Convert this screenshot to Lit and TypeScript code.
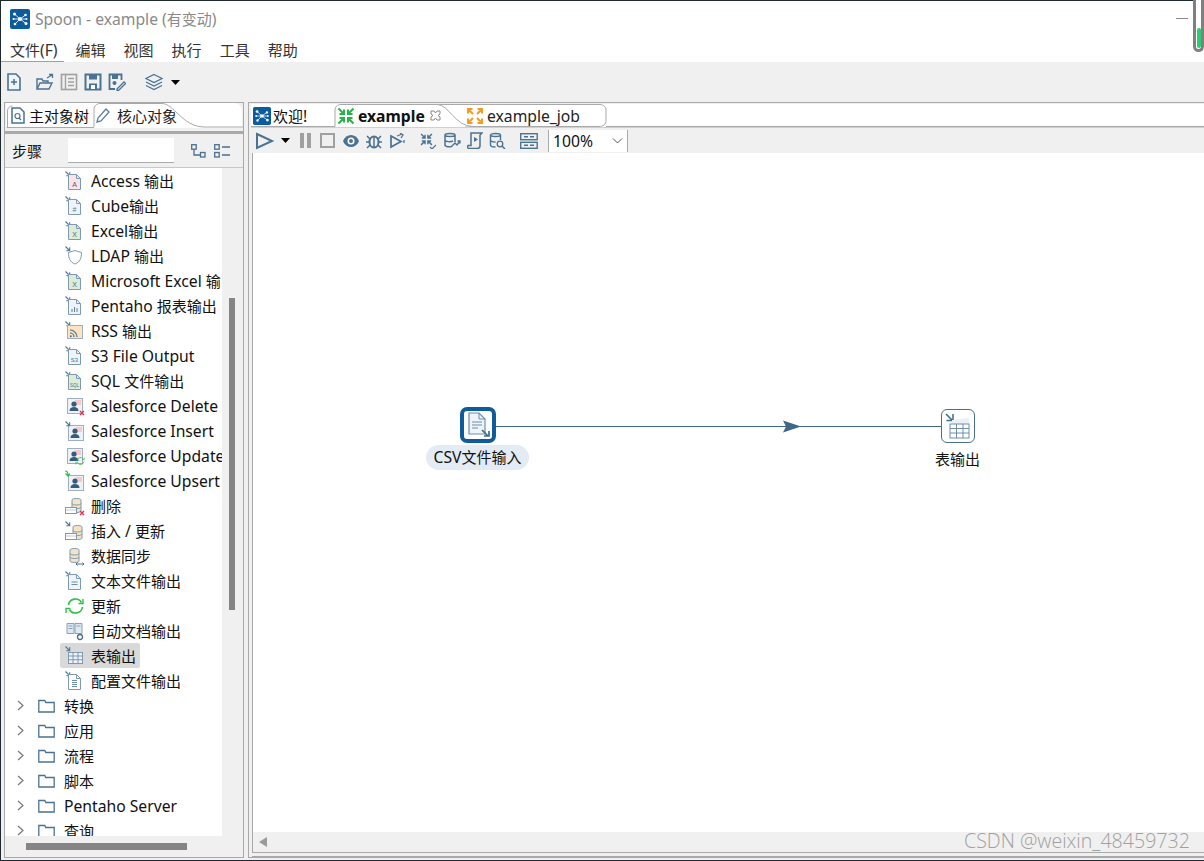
import { LitElement, html, css, svg } from "lit";
import { customElement } from "lit/decorators.js";

const B = "#4a7293";
const sv = (w: number, h: number, c: unknown, vb = `0 0 ${w} ${h}`) =>
  html`<svg class="ic" width=${w} height=${h} viewBox=${vb} fill="none">${c}</svg>`;

/* Latin runs are set slightly larger than CJK runs, as in the reference. */
const T = (s: string) =>
  s.split(/([\u3000-\u9fff]+)/).map((p, i) => (i % 2 ? html`<span class="cjk">${p}</span>` : p));

const arrow = svg`<path d="M1.500 1.500l4 4M2.300 5.700h3.400V2.300" stroke="#4f7896" stroke-width="1.100"/>`;
const page = (fill: string, mark: unknown = "") => svg`<path d="M4.500 4.500h8l4 4v11h-12z" fill=${fill} stroke="#7d9ab2" stroke-width="1"/><path d="M12.500 4.500v4h4" stroke="#7d9ab2"/>${mark}`;
const tiny = (t: string, c = "#4d6f8c", s = 6) => svg`<text x="10.500" y="16.500" font-size=${s} font-family="Liberation Sans" text-anchor="middle" fill=${c}>${t}</text>`;
const sfBase = svg`<rect x="3.500" y="3.500" width="15" height="15" fill="#eef1f5" stroke="#9db0c2"/><rect x="11" y="5" width="6" height="5" fill="#f7c8cc"/><circle cx="10" cy="9" r="2.600" fill="#345d7d"/><path d="M5.500 16c0-3 2-4 4.500-4s4.500 1 4.500 4z" fill="#345d7d"/>`;
const redX = svg`<path d="M16 16l4 4M20 16l-4 4" stroke="#e8304a" stroke-width="1.400"/>`;
const db = svg`<path d="M7 4c0-2 9-2 9 0v11c0 2-9 2-9 0z" fill="#f5e3c6" stroke="#7d9ab2"/><path d="M7 7.500c0 2 9 2 9 0M7 11c0 2 9 2 9 0" stroke="#7d9ab2"/>`;
const grn = svg`<path d="M4 9a7 7 0 0 1 13-2.500M18 11a7 7 0 0 1-13 2.500" stroke="#2fbf4a" stroke-width="1.600"/><path d="M18.500 3v4.500H14M1.500 17v-4.500H6" stroke="#2fbf4a" stroke-width="1.400"/>`;

const icons: Record<string, unknown> = {
  access: svg`${arrow}${page("#fbe3e6", tiny("A", "#5a5a78", 7))}`,
  cube: svg`${arrow}${page("#eef4fa", tiny("#", "#5f7f9b", 7))}`,
  excel: svg`${arrow}${page("#dcecd6", tiny("X", "#4d6f8c", 7))}`,
  ldap: svg`${arrow}<path d="M11 5.500l6.500 2c0 6-1.500 9.500-6.500 11.500-5-2-6.500-5.500-6.500-11.500z" fill="#fff" stroke="#7d9ab2"/>`,
  pentaho: svg`${arrow}${page("#eef4fa", svg`<path d="M8 17v-3M10.500 17v-5M13 17v-4" stroke="#5f7f9b"/>`)}`,
  rss: svg`${arrow}<rect x="3.500" y="5.500" width="15" height="13" fill="#fbe3c0" stroke="#9db0c2"/><path d="M6 10a7 7 0 0 1 7 7M6 13a4 4 0 0 1 4 4" stroke="#4d6f8c" stroke-width="1.200"/><circle cx="6.800" cy="16.200" r="1" fill="#4d6f8c"/>`,
  s3: svg`${arrow}${page("#eef4fa", tiny("S3", "#4d6f8c", 6))}`,
  sql: svg`${arrow}${page("#dcecd6", tiny("SQL", "#4d6f8c", 4.500))}`,
  sfd: svg`${sfBase}${redX}`,
  sfi: svg`<g transform="translate(1 2)">${sfBase}</g>${arrow}`,
  sfu: svg`${sfBase}<g transform="translate(11 11) scale(.5)">${grn}</g>`,
  sfp: svg`<g transform="translate(1 2)">${sfBase}</g><path d="M1 1c2 0 3 1 3 4M1.500 3.500L4 6l2-2.500" stroke="#2fbf4a" stroke-width="1.200"/>`,
  del: svg`<g transform="translate(1 1)">${db}</g><rect x="1.500" y="12.500" width="11" height="6" fill="#fff" stroke="#7d9ab2"/><path d="M1.500 15h11" stroke="#7d9ab2" stroke-dasharray="1 1"/>${redX}`,
  ins: svg`<g transform="translate(2 3)">${db}</g>${arrow}<rect x="1.500" y="13.500" width="11" height="6" fill="#fff" stroke="#7d9ab2"/><path d="M1.500 16h11" stroke="#7d9ab2" stroke-dasharray="1 1"/>`,
  sync: svg`<g transform="translate(-1 1)">${db}</g><path d="M12 19h8M13.500 17.500L12 19l1.500 1.500M18.500 17.500L20 19l-1.500 1.500" stroke="#4d6f8c"/>`,
  text: svg`${arrow}${page("#eef4fa", svg`<path d="M7.500 12h6M7.500 14.500h6" stroke="#6f8ea8"/>`)}`,
  update: svg`<g transform="translate(.5 1)">${grn}</g>`,
  doc: svg`<path d="M3 3.500h7v10H3zM11 3.500h7v10h-7z" fill="#dfe8f0" stroke="#8aa3b8"/><path d="M4.500 6h4M4.500 8.500h4M12.500 6h4" stroke="#8aa3b8"/><circle cx="16" cy="17" r="2.500" stroke="#4d6f8c" stroke-width="1.300"/>`,
  table: svg`${arrow}<rect x="4.500" y="7.500" width="14" height="11" fill="#eef2f6" stroke="#7d9ab2"/><path d="M4.500 11h14M4.500 14.700h14M9 7.500v11M14 7.500v11" stroke="#7d9ab2"/>`,
  cfg: svg`${arrow}${page("#fff", svg`<path d="M8 10.500h5M8 12.500h5M8 14.500h5M8 16.500h5" stroke="#6f8ea8"/>`)}`,
};

const outputs: [string, string][] = [
  ["access", "Access 输出"], ["cube", "Cube输出"], ["excel", "Excel输出"], ["ldap", "LDAP 输出"],
  ["excel", "Microsoft Excel 输出"], ["pentaho", "Pentaho 报表输出"], ["rss", "RSS 输出"], ["s3", "S3 File Output"],
  ["sql", "SQL 文件输出"], ["sfd", "Salesforce Delete"], ["sfi", "Salesforce Insert"], ["sfu", "Salesforce Update"],
  ["sfp", "Salesforce Upsert"], ["del", "删除"], ["ins", "插入 / 更新"], ["sync", "数据同步"],
  ["text", "文本文件输出"], ["update", "更新"], ["doc", "自动文档输出"], ["table", "表输出"], ["cfg", "配置文件输出"],
];
const folders = ["转换", "应用", "流程", "脚本", "Pentaho Server", "查询"];

const logo = (s: number) => html`<svg class="ic" width=${s} height=${s} viewBox="0 0 20 20"><rect width="20" height="20" rx="2" fill="#0b5c9e"/><path d="M10 10L4.500 5M10 10l5.500-4M10 10l-5 5M10 10l6 4.500M10 10H3.500M10 10h6.500" stroke="#fff" stroke-width=".8"/><circle cx="10" cy="10" r="2" fill="#fff"/><circle cx="4.500" cy="5" r="1.500" fill="#fff"/><circle cx="15.500" cy="6" r="1.300" fill="#fff"/><circle cx="5" cy="15" r="1.300" fill="#fff"/><circle cx="16" cy="14.500" r="1.500" fill="#fff"/><circle cx="3.500" cy="10" r="1" fill="#fff"/><circle cx="16.500" cy="10" r="1" fill="#fff"/></svg>`;

const mergeArrows = (c: string) => svg`<path d="M1.500 1.500L7 7M7 2.500V7H2.500M16.500 1.500L11 7M11 2.500V7h4.500M1.500 16.500L7 11M7 15.500V11H2.500M16.500 16.500L11 11M11 15.500V11h4.500" stroke=${c} stroke-width="2"/>`;
const outArrows = (c: string) => svg`<path d="M7 7L2 2M2 6.500V2h4.500M11 7l5-5M11.500 2H16v4.500M7 11l-5 5M2 11.500V16h4.500M11 11l5 5M16 11.500V16h-4.500" stroke=${c} stroke-width="2"/>`;

const play = sv(20, 18, svg`<path d="M2 2l15 7-15 7z" stroke=${B} stroke-width="2"/>`);
const drop = html`<svg class="ic" width="9" height="5" viewBox="0 0 9 5"><path d="M0 0h9L4.500 5z" fill="#000"/></svg>`;

@customElement("app-root")
export class AppRoot extends LitElement {
  static styles = css`
    :host { display: block; width: 1204px; height: 861px; overflow: hidden; position: relative; background: #f0f0f0;
      font-family: "Noto Sans", "Noto Sans CJK SC", sans-serif; font-size: 15.7px; color: #111; }
    .cjk { font-size: 15px; }
    .ic { display: block; flex: none; }
    .app { display: flex; flex-direction: column; height: 859px; border-top: 1px solid #1f2a2e; border-left: 1px solid #1f2a2e; border-bottom: 1px solid #1f2a2e; }
    .title { height: 36px; background: #fff; display: flex; align-items: center; gap: 5px; padding-left: 9px; color: #8a8a8a; flex: none; }
    .menu { height: 25px; background: #fff; display: flex; align-items: center; gap: 18px; padding-left: 9px; flex: none; color: #333; }
    .menu span { line-height: 20px; }
    .menu .first { border-bottom: 1px solid #a0a0a0; margin-left: -9px; padding: 3px 6px 1px 9px; align-self: flex-end; margin-right: -6px; }
    .tools { height: 40px; flex: none; display: flex; align-items: center; padding-left: 5px; background: #f0f0f0; }
    .tools .ic { margin-right: 6px; }
    .s1 { width: 1px; flex: none; } .s2 { width: 2px; flex: none; } .s3 { width: 3px; flex: none; } .s4 { width: 4px; flex: none; } .s8 { width: 8px; flex: none; } .s9 { width: 9px; flex: none; } .s13 { width: 13px; flex: none; }
    .main { flex: 1; display: flex; min-height: 0; padding-left: 3px; gap: 4px; }
    .left { width: 240px; flex: none; border: 1px solid #a9a9a9; box-sizing: border-box; display: flex; flex-direction: column; background: #f0f0f0; height: 756px; }
    .ltabs { height: 25px; background: #fff; position: relative; margin: 0 1px; display: flex; align-items: center; flex: none; border-radius: 0 8px 0 0; }
    .shape { position: absolute; left: 0; top: 0; }
    .tab { position: relative; display: flex; align-items: center; gap: 3px; white-space: nowrap; }
    .lt1 { margin-left: 5px; width: 83px; gap: 4px; }
    .lt2 { margin-left: 1px; color: #222; gap: 6px; }
    .lline { height: 3px; margin-top: 3px; background: #a9a9a9; flex: none; }
    .steps { height: 34px; flex: none; display: flex; align-items: center; padding-left: 7px; border-bottom: 1px solid #c8c8c8; box-sizing: border-box; }
    .steps .lbl { width: 56px; }
    .input { width: 106px; height: 25px; background: #fff; border-bottom: 1px solid #aaa; box-sizing: border-box; margin-right: 17px; }
    .steps .ic { margin-right: 6px; }
    .treewrap { flex: 1; min-height: 0; display: flex; position: relative; }
    .tree { width: 217px; background: #fff; overflow: hidden; flex: none; height: 668px; }
    .row { height: 25px; display: flex; align-items: center; white-space: nowrap; position: relative; }
    .leaf { padding-left: 59px; gap: 6px; }
    .leaf.sel::before { content: ""; position: absolute; left: 55px; top: 0; width: 80px; height: 25px; background: #d9d9d9; border-radius: 2px; }
    .leaf > * { position: relative; }
    .folder { padding-left: 12px; }
    .folder .chev { margin-right: 14px; }
    .folder .fo { margin-right: 9px; }
    .vthumb { position: absolute; left: 224px; top: 130px; width: 6px; height: 312px; background: #858585; }
    .hthumb { position: absolute; left: 21px; top: 675px; width: 161px; height: 7px; background: #858585; }
    .right { flex: 1; min-width: 0; border: 1px solid #a9a9a9; border-right: none; box-sizing: border-box; display: flex; flex-direction: column; padding: 1px 0 0 2px; height: 756px; }
    .rtabs { height: 23px; background: #fff; position: relative; display: flex; align-items: center; flex: none; }
    .rt1 { margin-left: 2px; width: 84px; gap: 2px; }
    .rt2 { width: 129px; font-weight: 700; color: #111; gap: 3px; }
    .rt2 .x { margin-left: 2px; }
    .rt3 { gap: 3px; color: #222; }
    .rbar { height: 26px; flex: none; display: flex; align-items: center; padding-left: 4px; border-top: 1px solid #d0d0d0; box-sizing: border-box; }
    .rbar .ic { margin-right: 6px; }
    .zoom { width: 80px; height: 22px; background: #fff; border-left: 1px solid #aaa; border-right: 1px solid #aaa; box-sizing: border-box; display: flex; align-items: center; justify-content: space-between; padding: 0 4px; margin-left: 4px; }
    .zoom .ic { margin: 0; }
    .canvas { flex: 1; min-height: 0; background: #fff; position: relative; border-left: 1px solid #a9a9a9; overflow: hidden; margin-left: 1px; }
    .edge { position: absolute; left: 0; top: 0; }
    .node { position: absolute; box-sizing: border-box; background: #fff; display: flex; align-items: center; justify-content: center; }
    .n1 { left: 207px; top: 254px; width: 36px; height: 36px; border: 4px solid #0f5c9c; border-radius: 7px; }
    .n2 { left: 688px; top: 256px; width: 34px; height: 34px; border: 1.5px solid #4a6e8e; border-radius: 6px; }
    .lab { position: absolute; white-space: nowrap; line-height: 25px; text-align: center; }
    .l1 { left: 173px; top: 292px; width: 103px; height: 25px; background: #e3ebf4; border-radius: 13px; color: #111; }
    .l2 { left: 682px; top: 294px; width: 45px; height: 25px; }
    .hbar { height: 20px; flex: none; background: #f0f0f0; display: flex; align-items: center; padding-left: 6px; margin-left: 1px; border-left: 1px solid #a9a9a9; }
    .bot { flex: none; height: 5px; border-top: 1px solid #a9a9a9; border-bottom: 1px solid #a9a9a9; box-sizing: border-box; margin-left: 1px; }
    .wm { position: absolute; left: 964px; top: 828px; font-size: 19.600px; line-height: 26px; color: #a0a0a0; white-space: nowrap; font-family: "Open Sans", sans-serif; font-weight: 300; }
    .min { position: absolute; left: 1176px; top: 18px; width: 12px; height: 1px; background: #8a8a8a; }
    .pill { position: absolute; left: 1193px; top: -6px; width: 11px; height: 58px; box-sizing: border-box; border: 3px solid #808080; border-top: none; border-radius: 0 0 7px 7px; background: #fff; }
    .pill i { position: absolute; left: .5px; top: 34px; width: 4px; height: 20px; border-radius: 2px; background: #2ecc71; }
  `;

  render() {
    return html`
      <div class="app">
        <div class="title">${logo(20)}<span>${T("Spoon - example (有变动)")}</span></div>
        <div class="menu">
          <span class="first">${T("文件(F)")}</span><span class="cjk">编辑</span><span class="cjk">视图</span><span class="cjk">执行</span><span class="cjk">工具</span><span class="cjk">帮助</span>
        </div>
        <div class="tools">
          ${sv(16, 20, svg`<path d="M2 2h8l4 4v12H2z" stroke=${B} stroke-width="1.600" fill="#eef4fa"/><path d="M5 10h6M8 7v6" stroke=${B} stroke-width="1.500"/>`)}
          <span class="s8"></span>
          ${sv(18, 18, svg`<path d="M1 16V6h5l1 2h5v2M1 16l3-6h12l-3 6z" stroke=${B} stroke-width="1.400"/><path d="M11 5l5-3M13 1.500h3.500V5" stroke=${B} stroke-width="1.300"/>`)}
          ${sv(18, 18, svg`<rect x="1.500" y="1.500" width="15" height="15" stroke="#a0a0a0" stroke-width="1.600"/><path d="M5.500 2v14M8 5.500h6M8 9h6M8 12.500h6" stroke="#a0a0a0" stroke-width="1.400"/>`)}
          ${sv(18, 18, svg`<path d="M1.500 1.500h15v15h-15z" stroke=${B} stroke-width="2"/><path d="M5 1.500h8v5H5zM5 16.500v-6h8v6" fill=${B}/><rect x="7" y="12" width="4" height="4" fill="#fff"/>`)}
          ${sv(18, 18, svg`<path d="M7 16H1.500V1.500h12V7" stroke=${B} stroke-width="1.800"/><path d="M4 2h6v4H4z" fill=${B}/><circle cx="6.500" cy="10" r="2" fill=${B}/><path d="M9 16l7-7 1.500 1.500-7 7H9z" stroke=${B} stroke-width="1.300"/>`)}
          <span class="s13"></span>
          ${sv(18, 18, svg`<path d="M9 1.500l8 4-8 4-8-4zM1 9l8 4 8-4M1 12.500l8 4 8-4" stroke=${B} stroke-width="1.200"/>`)}
          <span class="s2"></span>
          ${drop}
        </div>
        <div class="main">
          <section class="left">
            <div class="ltabs">
              <svg class="shape" width="238" height="25" viewBox="0 0 238 25" fill="none"><path d="M.5 24.500H88" stroke="#a9a9a9"/><path d="M1.500 24V8c0-3 2-5 5-5" stroke="#a9a9a9"/><path d="M88 24V6c0-3 3-5.500 6-5.500h62c12 0 20 23 42 23.500h40" stroke="#a9a9a9" fill="#fff"/></svg>
              <div class="tab lt1">${sv(14, 17, svg`<path d="M1 1h8l4 4v11H1z" stroke=${B} stroke-width="1.500"/><circle cx="6.500" cy="9" r="2.500" stroke=${B} stroke-width="1.200"/><path d="M8 11l2 2" stroke=${B} stroke-width="1.200"/>`)}<span class="cjk">主对象树</span></div>
              <div class="tab lt2">${sv(16, 17, svg`<path d="M2 15l1-4 8-9 3 3-8 9z" stroke="#5a7f9e" stroke-width="1.300"/>`)}<span class="cjk">核心对象</span></div>
            </div>
            <div class="lline"></div>
            <div class="steps">
              <span class="lbl cjk">步骤</span><div class="input"></div>
              ${sv(15, 14, svg`<rect x=".7" y=".7" width="4.500" height="4.500" stroke="#4a6f8f" stroke-width="1.300"/><rect x="9.500" y="8.500" width="4.500" height="4.500" stroke="#4a6f8f" stroke-width="1.300"/><path d="M3 5.500V11h6.500" stroke="#4a6f8f" stroke-width="1.300"/>`)}
              <span class="s2"></span>
              ${sv(17, 14, svg`<rect x=".7" y=".7" width="4.500" height="4.500" stroke="#4a6f8f" stroke-width="1.300"/><rect x=".7" y="8.500" width="4.500" height="4.500" stroke="#4a6f8f" stroke-width="1.300"/><path d="M8 3h8M8 11h8" stroke="#4a6f8f" stroke-width="1.300"/>`)}
            </div>
            <div class="treewrap">
              <div class="tree">
                ${outputs.map(([k, t]) => html`<div class="row leaf ${t === "表输出" ? "sel" : ""}">${sv(21, 21, icons[k])}<span>${T(t)}</span></div>`)}
                ${folders.map((t) => html`<div class="row folder">
                  <svg class="ic chev" width="7" height="11" viewBox="0 0 7 11" fill="none"><path d="M1 1l5 4.500L1 10" stroke="#777" stroke-width="1.200"/></svg>
                  <svg class="ic fo" width="17" height="14" viewBox="0 0 17 14" fill="none"><path d="M.8 13V1.500h6l1 2h8.400V13z" stroke="#4a7293" stroke-width="1.300"/></svg>
                  <span>${T(t)}</span></div>`)}
              </div>
              <div class="vthumb"></div>
              <div class="hthumb"></div>
            </div>
          </section>
          <section class="right">
            <div class="rtabs">
              <svg class="shape" width="954" height="23" viewBox="0 0 954 23" fill="none"><path d="M0 22.500h84" stroke="#a9a9a9"/><path d="M355 22.500H954" stroke="#a9a9a9"/><path d="M214 22.500h134c4 0 7-2 7-6V6c0-3-3-5.500-6-5.500H186" stroke="#a9a9a9"/><path d="M84 22.500V6c0-3 2-5.500 6-5.500h96c12 0 18 22 36 22h4" stroke="#a9a9a9" fill="#fff"/></svg>
              <div class="tab rt1">${logo(18)}<span>${T("欢迎!")}</span></div>
              <div class="tab rt2">${sv(18, 18, mergeArrows("#27b24a"), "0 0 18 18")}<span>example</span><svg class="ic x" width="11" height="11" viewBox="0 0 11 11" fill="none"><path d="M1 1h3l1.500 2L7 1h3v3L8 5.500 10 7v3H7L5.500 8 4 10H1V7l2-1.500L1 4z" stroke="#888"/></svg></div>
              <div class="tab rt3">${sv(18, 18, outArrows("#f59a23"), "0 0 18 18")}<span>example_job</span></div>
            </div>
            <div class="rbar">
              ${play}
              ${drop}
              <span class="s4"></span>
              ${sv(11, 15, svg`<path d="M0 0h4v15H0zM7 0h4v15H7z" fill="#a0a0a0"/>`)}
              <span class="s3"></span>
              ${sv(15, 15, svg`<rect x="1" y="1" width="13" height="13" stroke="#a0a0a0" stroke-width="2"/>`)}
              <span class="s1"></span>
              ${sv(18, 14, svg`<path d="M1 7c3-8 13-8 16 0-3 8-13 8-16 0z" fill=${B}/><circle cx="9" cy="7" r="3.500" fill="#fff"/><circle cx="9" cy="7" r="2" fill=${B}/>`)}
              ${sv(16, 16, svg`<ellipse cx="8" cy="9" rx="4.500" ry="5.500" stroke=${B} stroke-width="2"/><path d="M1 3l3 3M15 3l-3 3M0 9h3M13 9h3M1 15l3-3M15 15l-3-3M8 4v10" stroke=${B} stroke-width="1.500"/>`)}
              <span class="s1"></span>
              ${sv(16, 16, svg`<path d="M2 3l10 5.500L2 14z" stroke=${B} stroke-width="1.700"/><path d="M8 3l4-1.500M11 0l3 2-2 3M15 7v3" stroke=${B} stroke-width="1.300"/>`)}
              <span class="s9"></span>
              ${sv(16, 16, svg`<g transform="scale(.72)">${mergeArrows(B)}</g><path d="M10 14l2 2 4-4" stroke=${B} stroke-width="1.200"/>`)}
              <span class="s1"></span>
              ${sv(18, 17, svg`<path d="M2 3c0-2 10-2 10 0v7M2 3v10c0 2 5 2 6 1.500M2 3c0 2 10 2 10 0M2 8c0 2 6 2 8 1" stroke=${B} stroke-width="1.500"/><path d="M8 15l4-4 2 2 3-4M14.500 9H17v2.500" stroke=${B} stroke-width="1.300"/>`)}
              ${sv(16, 17, svg`<path d="M4 1h11l-2 2v11c0 2-2 2.500-3 2.500H2c-1 0-2-1-1-3h3zM4 14V1" stroke=${B} stroke-width="1.500"/><path d="M7 5l4 2.500L7 10z" fill=${B}/>`)}
              ${sv(17, 17, svg`<path d="M1.500 3c0-2 10-2 10 0v5M1.500 3v10c0 2 4 2 5 2M1.500 3c0 2 10 2 10 0M1.500 8c0 1.500 3 2 5 2" stroke=${B} stroke-width="1.400"/><circle cx="11" cy="12" r="2.800" stroke=${B} stroke-width="1.300"/><path d="M13 14l3 3" stroke=${B} stroke-width="1.500"/>`)}
              <span class="s8"></span>
              ${sv(18, 16, svg`<rect x=".7" y=".7" width="16.500" height="6" stroke=${B} stroke-width="1.400"/><rect x=".7" y="9.300" width="16.500" height="6" stroke=${B} stroke-width="1.400"/><path d="M4 3.700h4M10 3.700h4M4 12.300h4M10 12.300h4" stroke=${B} stroke-width="1.400"/>`)}
              <div class="zoom"><span>100%</span><svg class="ic" width="11" height="6" viewBox="0 0 11 6" fill="none"><path d="M1 .5l4.500 4.500L10 .5" stroke="#555"/></svg></div>
            </div>
            <div class="canvas">
              <svg class="edge" width="800" height="400" fill="none"><path d="M243 273.500H688" stroke="#3e6787" stroke-width="1"/><path d="M530 267.500l18 6-18 6 3-6z" fill="#3e6787"/></svg>
              <div class="node n1">${sv(26, 26, svg`<path d="M4 1h10l6 6v15H4z" fill="#eef4fa" stroke="#6f8ea8" stroke-width="1.200"/><path d="M14 1v6h6M7 10h10M7 13h10M7 16h6" stroke="#6f8ea8"/><path d="M17 18l6 6M24 19v5h-5" stroke="#3d6a8f" stroke-width="1.700"/>`)}</div>
              <div class="lab l1">${T("CSV文件输入")}</div>
              <div class="node n2">${sv(30, 30, svg`<path d="M3 3l7 7M3.500 9.500H10V3" stroke="#3d6a8f" stroke-width="1.500"/><path d="M9 9l17-2v19H9z" fill="#eaf0f6"/><rect x="7" y="13" width="19" height="14" fill="#fff" stroke="#6f8ea8"/><path d="M7 17.500h19M7 22h19M13.500 13v14M20 13v14" stroke="#6f8ea8"/>`)}</div>
              <div class="lab l2 cjk">表输出</div>
            </div>
            <div class="hbar"><svg class="ic" width="8" height="10" viewBox="0 0 8 10"><path d="M8 0v10L0 5z" fill="#9a9a9a"/></svg></div>
            <div class="bot"></div>
          </section>
        </div>
      </div>
      <div class="wm">CSDN @weixin_48459732</div>
      <div class="min"></div>
      <div class="pill"><i></i></div>
    `;
  }
}
